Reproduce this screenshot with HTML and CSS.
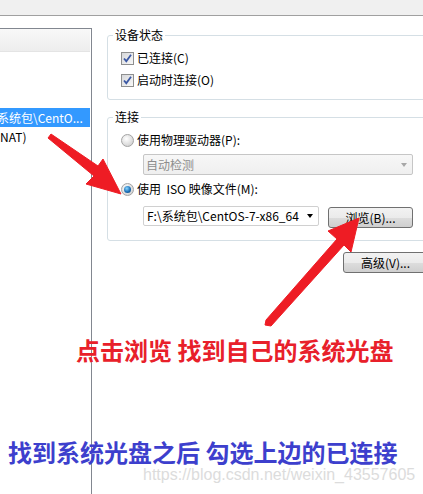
FILE: index.html
```html
<!DOCTYPE html>
<html lang="zh-CN">
<head>
  <meta charset="UTF-8" />
  <meta name="viewport" content="width=device-width, initial-scale=1.0"/>
  <title>虚拟机设置 - CD/DVD</title>
  <link rel="stylesheet" href="styles.css">
</head>
<body>
<div class="screen">
  <div class="titlebar"></div>

  <div class="device-list">
    <div class="list-header"></div>
    <div class="list-rows">
      <div class="list-row selected"><span>系统包\CentO...</span></div>
      <div class="list-row"><span>NAT)</span></div>
    </div>
  </div>

  <div class="settings">
    <fieldset class="group">
      <legend>设备状态</legend>
      <label class="option">
        <span class="checkbox"><svg width="11" height="11" viewBox="0 0 11 11"><path d="M2 5.5 L4.3 8.2 L9 1.8" /></svg></span>
        已连接(C)
      </label>
      <label class="option">
        <span class="checkbox"><svg width="11" height="11" viewBox="0 0 11 11"><path d="M2 5.5 L4.3 8.2 L9 1.8" /></svg></span>
        启动时连接(O)
      </label>
    </fieldset>

    <fieldset class="group connect-group">
      <legend>连接</legend>
      <label class="option"><span class="radio"></span>使用物理驱动器(P):</label>
      <div class="select disabled">自动检测<span class="caret"></span></div>
      <label class="option"><span class="radio checked"></span>使用&nbsp;&nbsp;ISO 映像文件(M):</label>
      <div class="iso-row">
        <div class="select combo">F:\系统包\CentOS-7-x86_64<span class="caret"></span></div>
        <button class="btn browse">浏览(B)...</button>
      </div>
    </fieldset>

    <div class="advanced-row">
      <button class="btn advanced">高级(V)...</button>
    </div>
  </div>

  <p class="note note-red">点击浏览 找到自己的系统光盘</p>
  <p class="note note-blue">找到系统光盘之后 勾选上边的已连接</p>
  <p class="watermark">https://blog.csdn.net/weixin_43557605</p>

  <!-- annotation arrows drawn over the dialog -->
  <svg class="arrows" width="423" height="494" viewBox="0 0 423 494">
    <polygon points="48,138 51,134 98,166 103,159 121,194 86,184 94,176" />
    <polygon points="265,325 266,320 337,239 328,231 359,218 351,252 344,245 271,326" />
  </svg>
</div>
</body>
</html>
```

FILE: styles.css
```css
html, body {
  margin: 0;
  padding: 0;
  overflow: hidden;
  background-color: #fff;
}

.screen {
  position: relative;
  width: 423px;
  height: 494px;
  overflow: hidden;
  display: grid;
  grid-template-columns: 92px 1fr;
  grid-template-rows: 16px auto auto auto auto 1fr;
  font-family: "Noto Sans CJK SC", "Microsoft YaHei", sans-serif;
  font-size: 12px;
  color: #000;
}

.titlebar {
  grid-column: 1 / -1;
  grid-row: 1;
  background-color: #f0f0f0;
  border-bottom: 1px solid #a0a0a0;
}

/* left device list (cropped) */
.device-list {
  grid-column: 1;
  grid-row: 2 / -1;
  margin-top: 12px;
  border-top: 1px solid #828790;
  border-right: 1px solid #828790;
  background-color: #fff;
}

.list-header {
  height: 23px;
  margin-right: 1px;
  background: linear-gradient(#f8f8f8, #ededed);
  border-bottom: 1px solid #e4e4e4;
  box-sizing: border-box;
}

.list-rows {
  padding-top: 56px;
}

.list-row {
  height: 19px;
  line-height: 19px;
  margin-right: 1px;
  white-space: nowrap;
  overflow: hidden;
}

.list-row span {
  display: inline-block;
}

.list-row.selected {
  background-color: #3399ff;
  color: #fff;
}

.list-row.selected span {
  margin-left: -3px;
}

/* right settings column */
.settings {
  grid-column: 2;
  grid-row: 2;
  padding: 11px 0 0 15px;
  display: flex;
  flex-direction: column;
}

.group {
  margin: 0 -10px 0 0;
  padding: 4px 0 8px 13px;
  border: 1px solid #d5dfe5;
  border-radius: 3px;
}

.group legend {
  margin-left: -8px;
  padding: 0 2px;
  line-height: 16px;
}

.connect-group {
  margin-top: 9px;
  padding-bottom: 12px;
}

.option {
  display: flex;
  align-items: center;
  gap: 3px;
  height: 22px;
  line-height: 16px;
  white-space: nowrap;
}

.checkbox {
  width: 13px;
  height: 13px;
  box-sizing: border-box;
  border: 1px solid #8e8f8f;
  background: linear-gradient(135deg, #d6d7da, #f8f8f8);
  display: flex;
  align-items: center;
  justify-content: center;
}

.checkbox svg path {
  fill: none;
  stroke: #3b58a4;
  stroke-width: 1.8;
}

.radio {
  width: 13px;
  height: 13px;
  box-sizing: border-box;
  border: 1px solid #a3a3a3;
  border-radius: 50%;
  background: radial-gradient(circle at 40% 35%, #ffffff, #d4d4d4 75%);
  display: grid;
  place-items: center;
}

.radio.checked::after {
  content: "";
  width: 7px;
  height: 7px;
  border-radius: 50%;
  background: radial-gradient(circle at 40% 35%, #8ad6ff, #1b70b8 55%, #0b3c6e);
}

.select {
  display: flex;
  align-items: center;
  box-sizing: border-box;
  height: 21px;
  padding-left: 2px;
  border: 1px solid #c6c6c6;
  border-radius: 2px;
  line-height: 16px;
  white-space: nowrap;
}

.select.disabled {
  width: 270px;
  margin: 3px 0 3px 22px;
  background: linear-gradient(#f7f7f7, #efefef);
  color: #8d8d8d;
}

.caret {
  margin-left: auto;
  margin-right: 5px;
  width: 0;
  height: 0;
  border-left: 3.5px solid transparent;
  border-right: 3.5px solid transparent;
  border-top: 4px solid #000;
}

.disabled .caret {
  border-top-color: #a7a7a7;
}

.iso-row {
  display: flex;
  align-items: flex-start;
  gap: 9px;
  margin: 6px 0 0 22px;
  height: 22px;
}

.select.combo {
  width: 176px;
  height: 20px;
  padding-left: 3px;
  background-color: #fff;
  border-color: #d0d0d0;
}

.btn {
  box-sizing: border-box;
  height: 21px;
  padding: 0;
  border: 1px solid #707070;
  border-radius: 3px;
  background: linear-gradient(#f2f2f2 0%, #ebebeb 50%, #dddddd 51%, #cfcfcf 100%);
  font-family: inherit;
  font-size: 12px;
  line-height: 16px;
  color: #000;
}

.btn.browse {
  width: 85px;
  margin-top: 1px;
}

.advanced-row {
  display: flex;
  justify-content: flex-end;
  margin: 11px -5px 0 0;
}

.btn.advanced {
  width: 85px;
}

/* annotations */
.note {
  grid-column: 1 / -1;
  margin: 0;
  font-weight: 700;
  font-size: 24px;
  line-height: 28px;
  white-space: nowrap;
  position: relative;
}

.note-red {
  grid-row: 3;
  margin-top: 63px;
  padding-left: 76px;
  color: #e8202a;
}

.note-blue {
  grid-row: 4;
  margin-top: 74px;
  padding-left: 8px;
  color: #3d3fcd;
}

.watermark {
  grid-column: 1 / -1;
  grid-row: 5;
  margin: 0;
  padding-left: 143px;
  font-family: "Liberation Sans", Arial, sans-serif;
  font-size: 16px;
  line-height: 17px;
  color: #dcdcdc;
  white-space: nowrap;
  position: relative;
}

.arrows {
  position: absolute;
  left: 0;
  top: 0;
  pointer-events: none;
}

.arrows polygon {
  fill: #ee1c24;
  stroke: #ee1c24;
  stroke-width: 1;
  stroke-linejoin: round;
}
```
